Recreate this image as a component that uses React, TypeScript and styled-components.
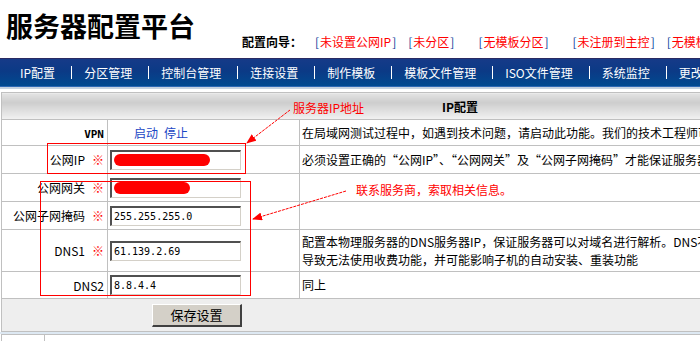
import React from "react";
import styled, { createGlobalStyle } from "styled-components";

const GlobalStyle = createGlobalStyle`
  html, body {
    margin: 0;
    padding: 0;
    background: #fff;
    overflow: hidden;
  }
  body {
    font-family: "Noto Sans CJK SC", "Liberation Sans", sans-serif;
    font-size: 12px;
    color: #000;
  }
`;

interface GuideLink {
  text: string;
  wide?: boolean;
}

const guideLinks: GuideLink[] = [
  { text: "未设置公网IP" },
  { text: "未分区", wide: true },
  { text: "无模板分区", wide: true },
  { text: "未注册到主控" },
  { text: "无模板分区" },
];

const navItems = [
  "IP配置",
  "分区管理",
  "控制台管理",
  "连接设置",
  "制作模板",
  "模板文件管理",
  "ISO文件管理",
  "系统监控",
  "更改密码",
];

interface FieldRow {
  label: string;
  required: boolean;
  value?: string;
  redact?: number;
  desc?: string[];
  h: number;
}

const fieldRows: FieldRow[] = [
  {
    label: "公网IP",
    required: true,
    redact: 96,
    desc: ["必须设置正确的“公网IP”、“公网网关”及“公网子网掩码”才能保证服务器正常工作"],
    h: 28,
  },
  { label: "公网网关", required: true, redact: 76, h: 28 },
  { label: "公网子网掩码", required: true, value: "255.255.255.0", h: 28 },
  {
    label: "DNS1",
    required: true,
    value: "61.139.2.69",
    desc: [
      "配置本物理服务器的DNS服务器IP，保证服务器可以对域名进行解析。DNS不能正确设置将",
      "导致无法使用收费功能，并可能影响子机的自动安装、重装功能",
    ],
    h: 42,
  },
  { label: "DNS2", required: false, value: "8.8.4.4", desc: ["同上"], h: 27 },
];

const App: React.FC = () => {
  return (
    <Page>
      <GlobalStyle />
      <Header>
        <Title>服务器配置平台</Title>
        <Guide>
          <GuideLabel>配置向导：</GuideLabel>
          {guideLinks.map((link, index) => (
            <GuideItem key={index} $wide={link.wide}>
              <Bracket>[</Bracket>
              {link.text}
              <Bracket>]</Bracket>
            </GuideItem>
          ))}
        </Guide>
      </Header>

      <Nav>
        {navItems.map((item, index) => (
          <React.Fragment key={item}>
            {index > 0 && <NavSep />}
            <NavItem>{item}</NavItem>
          </React.Fragment>
        ))}
      </Nav>
      <NavShade />

      <Grid>
        <colgroup>
          <col width={106} />
          <col width={192} />
          <col />
        </colgroup>
        <tbody>
          <Row $h={27}>
            <HeadCell colSpan={3}>IP配置</HeadCell>
          </Row>
          <Row $h={26}>
            <LabelCell>
              <Bold>VPN</Bold>
            </LabelCell>
            <FieldCell>
              <Actions>
                <Action>启动</Action>
                <Action>停止</Action>
              </Actions>
            </FieldCell>
            <DescCell>
              在局域网测试过程中，如遇到技术问题，请启动此功能。我们的技术工程师可以远程协助您解决问题。
            </DescCell>
          </Row>
          {fieldRows.map((row) => (
            <Row key={row.label} $h={row.h}>
              <LabelCell>
                {row.label}
                {row.required && <Star>※</Star>}
              </LabelCell>
              <FieldCell>
                <Field>
                  {row.redact ? (
                    <Redact style={{ width: row.redact }} />
                  ) : (
                    row.value
                  )}
                </Field>
              </FieldCell>
              <DescCell>
                {row.desc?.map((line, i) => (
                  <div key={i}>{line}</div>
                ))}
              </DescCell>
            </Row>
          ))}
          <Row $h={33}>
            <ButtonCell colSpan={3}>
              <SaveButton>保存设置</SaveButton>
            </ButtonCell>
          </Row>
        </tbody>
      </Grid>
      <Divider />
      <Grid>
        <colgroup>
          <col width={43} />
          <col />
        </colgroup>
        <tbody>
          <Row $h={20}>
            <PlainCell />
            <PlainCell />
          </Row>
        </tbody>
      </Grid>

      {/* hand-drawn annotations over the form */}
      <Marks width={700} height={341}>
        <defs>
          <marker
            id="head"
            markerWidth="10"
            markerHeight="8"
            refX="9"
            refY="4"
            orient="auto"
            markerUnits="userSpaceOnUse"
          >
            <path d="M0,0 L10,4 L0,8 Z" fill="#ff0000" />
          </marker>
        </defs>
        <rect x={47.5} y={143.5} width={198} height={30} fill="none" stroke="#ff0000" />
        <rect x={40.5} y={181.5} width={210} height={114} fill="none" stroke="#ff0000" />
        <line
          x1={290}
          y1={110}
          x2={247}
          y2={143}
          stroke="#ff0000"
          strokeDasharray="3 1"
          markerEnd="url(#head)"
        />
        <line
          x1={346}
          y1={191}
          x2={253}
          y2={219}
          stroke="#ff0000"
          strokeDasharray="3 1"
          markerEnd="url(#head)"
        />
      </Marks>
      <Note style={{ left: 293, top: 100 }}>服务器IP地址</Note>
      <Note style={{ left: 356, top: 182 }}>联系服务商，索取相关信息。</Note>
    </Page>
  );
};

export default App;

const Page = styled.div`
  position: relative;
  width: 1000px;
  height: 341px;
  overflow: hidden;
`;

const Header = styled.div`
  display: flex;
  align-items: flex-start;
  height: 58px;
  box-sizing: border-box;
  padding: 12px 0 0 6px;
`;

const Title = styled.h1`
  margin: 0;
  font-size: 27px;
  line-height: 28px;
  font-weight: bold;
`;

const Guide = styled.div`
  display: flex;
  margin: 22px 0 0 47px;
  line-height: 16px;
  white-space: nowrap;
`;

const GuideLabel = styled.span`
  font-weight: bold;
  margin-right: 12px;
`;

const GuideItem = styled.span<{ $wide?: boolean }>`
  color: #ff0000;
  margin-right: ${(p) => (p.$wide ? 22 : 10)}px;
`;

const Bracket = styled.span`
  color: #0a3a9a;
  margin: 0 1px;
`;

const Nav = styled.div`
  display: flex;
  align-items: center;
  height: 28px;
  box-sizing: border-box;
  padding-left: 20px;
  border-top: 1px solid #2a2a62;
  background: linear-gradient(to bottom, #163a88 0%, #0b3a86 45%, #004a90 100%);
  white-space: nowrap;
`;

const NavItem = styled.span`
  color: #fff;
  line-height: 16px;
`;

const NavSep = styled.span`
  width: 1px;
  height: 13px;
  background: #fff;
  margin: 0 12px 0 16px;
`;

const NavShade = styled.div`
  height: 1px;
  background: #2c68b4;
  border-bottom: 2px solid #c4d2e0;
  margin-bottom: 3px;
`;

const Grid = styled.table`
  width: 1000px;
  margin-left: 1px;
  border-collapse: collapse;
  table-layout: fixed;
`;

const Row = styled.tr<{ $h: number }>`
  height: ${(p) => p.$h}px;
`;

const HeadCell = styled.td`
  border: 1px solid #c0c0c0;
  padding: 0 0 0 440px;
  text-align: left;
  font-weight: bold;
  background: linear-gradient(to bottom, #e4e4e4 0%, #cdcdcd 35%, #f2f2f2 100%);
`;

const LabelCell = styled.td`
  border: 1px solid #c0c0c0;
  padding: 0 3px 0 0;
  text-align: right;
  white-space: nowrap;
`;

const Bold = styled.span`
  font-weight: bold;
  font-family: "DejaVu Sans Mono", monospace;
  font-size: 11px;
`;

const Star = styled.span`
  color: #ff0000;
  margin-left: 7px;
  font-size: 12px;
`;

const FieldCell = styled.td`
  border: 1px solid #c0c0c0;
  padding: 0 0 0 2px;
`;

const Actions = styled.div`
  display: flex;
  gap: 6px;
  padding-left: 24px;
`;

const Action = styled.span`
  color: #1a46c4;
`;

const Field = styled.div`
  display: flex;
  align-items: center;
  width: 131px;
  height: 20px;
  box-sizing: border-box;
  padding-left: 2px;
  border-style: solid;
  border-width: 2px 1px 1px 2px;
  border-color: #505050 #d4d0c8 #d4d0c8 #505050;
  background: #fff;
  font-family: "DejaVu Sans Mono", monospace;
  font-size: 10px;
`;

const Redact = styled.span`
  display: block;
  height: 12px;
  border-radius: 6px;
  background: #ff0000;
`;

const DescCell = styled.td`
  border: 1px solid #c0c0c0;
  padding: 0 0 0 2px;
  white-space: nowrap;
  line-height: 18px;
`;

const ButtonCell = styled.td`
  border: 1px solid #c0c0c0;
  padding: 0 0 0 150px;
  background: #eeeeee;
`;

const SaveButton = styled.button`
  width: 90px;
  height: 23px;
  padding: 0;
  background: #d4d0c8;
  border-style: solid;
  border-width: 1px 2px 2px 1px;
  border-color: #ffffff #404040 #404040 #ffffff;
  font-family: "Noto Sans CJK SC", sans-serif;
  font-size: 13px;
  color: #000;
`;

const Divider = styled.div`
  height: 2px;
  background: #dde8f2;
`;

const PlainCell = styled.td`
  border: 1px solid #c0c0c0;
`;

const Marks = styled.svg`
  position: absolute;
  left: 0;
  top: 0;
  pointer-events: none;
`;

const Note = styled.span`
  position: absolute;
  color: #ff0000;
  line-height: 16px;
  white-space: nowrap;
`;
